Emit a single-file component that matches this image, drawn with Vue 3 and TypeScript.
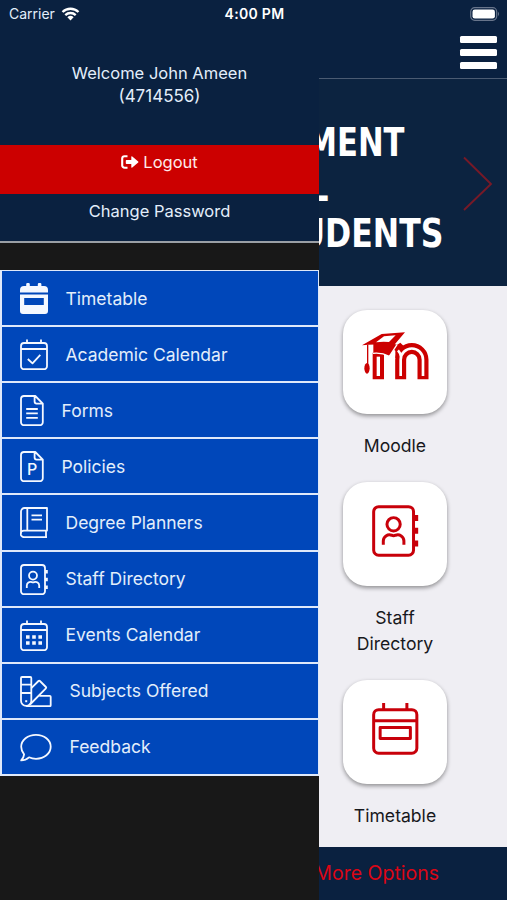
<script setup lang="ts">
import { defineComponent, h } from 'vue'

type IconName =
  | 'timetable'
  | 'academic'
  | 'forms'
  | 'policies'
  | 'planner'
  | 'staff'
  | 'events'
  | 'subjects'
  | 'feedback'
  | 'schedule'

interface Entry {
  label: string
  icon: IconName
}

const frame = 'M4 4h20a3 3 0 0 1 3 3v20.2a3 3 0 0 1-3 3H4a3 3 0 0 1-3-3V7a3 3 0 0 1 3-3z'
const page = 'M3.5 1h11.8L22.8 8.6v18.6a3 3 0 0 1-3 3H4a3 3 0 0 1-3-3V4a3 3 0 0 1 3-3zM14.6 1v5.6a2 2 0 0 0 2 2h6.2'

interface Shape {
  width: number
  lines: string[]
  solid?: string
  letter?: string
}

const shapes: Record<IconName, Shape> = {
  timetable: {
    width: 28,
    lines: [],
    solid:
      'M6.2 3V1.2a1.2 1.2 0 0 1 1.2-1.2h1.2a1.2 1.2 0 0 1 1.2 1.2V3h8V1.2A1.2 1.2 0 0 1 19 0h1.2a1.2 1.2 0 0 1 1.2 1.2V3H24a4 4 0 0 1 4 4v2.6H0V7a4 4 0 0 1 4-4zM0 11.6h28V28a3 3 0 0 1-3 3H3a3 3 0 0 1-3-3zM4.2 15v7h19.6v-7z',
  },
  academic: { width: 28, lines: [frame, 'M1 10h26M7 .4V4M21 .4V4', 'M7.800 20l4.700 4.400 7.800-8.600'] },
  forms: { width: 24, lines: [page, 'M6.2 14h11.6M6.2 18.4h11.6M6.2 22.8h11.6'] },
  policies: { width: 24, lines: [page], letter: 'P' },
  planner: {
    width: 28,
    lines: [
      'M27 30.2H4a3.2 3.2 0 0 1 0-6.6h23V1H4.5A3.5 3.5 0 0 0 1 4.500v22.300',
      'M7.300 1v22.600M26 23.600v6.600',
      'M11.500 8.300h10.500M11.500 12.700h10.500',
    ],
  },
  staff: {
    width: 28,
    lines: [
      'M4 1h18a3 3 0 0 1 3 3v23.200a3 3 0 0 1-3 3H4a3 3 0 0 1-3-3V4a3 3 0 0 1 3-3z',
      'M13 7.600a4 4 0 1 1 0 8 4 4 0 0 1 0-8z',
      'M6.800 24v-2.400a3.700 3.700 0 0 1 5-3.400q1.200.5 2.400 0a3.700 3.700 0 0 1 5 3.400V24',
    ],
    solid: 'M25 6h2.800v3.600H25zM25 13.700h2.800v3.600H25zM25 21.400h2.800v3.600H25z',
  },
  events: {
    width: 28,
    lines: [frame, 'M1 10h26M7 .4V4M21 .4V4'],
    solid:
      'M6 15.200h3.600v3.600H6zM12.200 15.200h3.600v3.600h-3.600zM18.400 15.200H22v3.600h-3.600zM6 21.200h3.600v3.600H6zM12.200 21.200h3.600v3.600h-3.600zM18.400 21.200H22v3.600h-3.600z',
  },
  subjects: {
    width: 32,
    lines: [
      'M2 1h8.300a1 1 0 0 1 1 1v22.800a5.150 5.150 0 0 1-10.300 0V2a1 1 0 0 1 1-1z',
      'M1 8.600h10.300M1 17h10.300',
      'M11.300 12.200l7.200-7.200a1 1 0 0 1 1.400 0l6 6a1 1 0 0 1 0 1.400L10 28.500',
      'M19.300 19.800h10.400a1 1 0 0 1 1 1v8.400a1 1 0 0 1-1 1H6.200',
    ],
    solid: 'M5.200 24.200h2v2h-2z',
  },
  feedback: {
    width: 32,
    lines: [
      'M16 2.800c8.200 0 14.700 5.300 14.700 12S24.200 26.800 16 26.800c-2.600 0-4.900-.5-7-1.500-2.200 2-4.800 3.100-7.800 3.100 1.700-1.900 2.700-3.900 2.900-6.100C2.300 20.200 1.200 17.600 1.200 14.800c0-6.700 6.600-12 14.800-12z',
    ],
  },
  schedule: { width: 28, lines: [frame, 'M1 10.700h26M7 0v4M21 0v4', 'M4.900 14.700h18.200v6.600H4.900z'] },
}

const Glyph = defineComponent({
  props: { name: { type: String, required: true } },
  setup(props) {
    return () => {
      const s = shapes[props.name as IconName]
      return h('svg', { viewBox: `0 0 ${s.width} 31`, fill: 'none', 'aria-hidden': 'true' }, [
        ...s.lines.map((d) =>
          h('path', { d, stroke: 'currentColor', 'stroke-width': 1.8, 'stroke-linejoin': 'round' }),
        ),
        s.solid ? h('path', { d: s.solid, fill: 'currentColor', 'fill-rule': 'evenodd' }) : null,
        s.letter
          ? h(
              'text',
              { x: 12.2, y: 24.4, 'text-anchor': 'middle', 'font-size': 16, 'font-weight': 500, fill: 'currentColor' },
              s.letter,
            )
          : null,
      ])
    }
  },
})

const menu: Entry[] = [
  { label: 'Timetable', icon: 'timetable' },
  { label: 'Academic Calendar', icon: 'academic' },
  { label: 'Forms', icon: 'forms' },
  { label: 'Policies', icon: 'policies' },
  { label: 'Degree Planners', icon: 'planner' },
  { label: 'Staff Directory', icon: 'staff' },
  { label: 'Events Calendar', icon: 'events' },
  { label: 'Subjects Offered', icon: 'subjects' },
  { label: 'Feedback', icon: 'feedback' },
]

const tiles: { label: string; icon: IconName | null }[] = [
  { label: 'Moodle', icon: null },
  { label: 'Staff Directory', icon: 'staff' },
  { label: 'Timetable', icon: 'schedule' },
]
</script>

<template>
  <div class="screen">
    <div class="status">
      <span class="carrier">Carrier
        <svg class="wifi" viewBox="0 0 18 14" aria-hidden="true">
          <path d="M1 5a11.500 11.500 0 0 1 16 0M3.800 8.100a7.500 7.500 0 0 1 10.400 0" fill="none" stroke="#fff" stroke-width="2.300" />
          <path d="M9 13.600 5.900 10.300a4.500 4.500 0 0 1 6.200 0z" fill="#fff" />
        </svg>
      </span>
      <span class="clock">4:00 PM</span>
      <svg class="battery" viewBox="0 0 30 14" aria-hidden="true">
        <rect x=".7" y=".7" width="26" height="12.600" rx="4" fill="none" stroke="#68758b" stroke-width="1.200" />
        <rect x="2.500" y="2.500" width="22.400" height="9" rx="2.300" fill="#fff" />
        <path d="M28 4.800q2 2.200 0 4.400z" fill="#68758b" />
      </svg>
    </div>

    <aside class="drawer">
      <header class="profile">
        <p>Welcome John Ameen</p>
        <p class="number">(4714556)</p>
      </header>
      <button class="logout">
        <svg viewBox="0 0 18 14" aria-hidden="true">
          <path d="M6.500 1.200H3.600A2.400 2.400 0 0 0 1.200 3.600v6.800a2.400 2.400 0 0 0 2.400 2.400h2.900" fill="none" stroke="#fff" stroke-width="2.100" />
          <path d="M5.500 5.100h4.800V1.900q0-1.200 1-.5l5.900 5q.6.600 0 1.200l-5.900 5q-1 .7-1-.5V8.900H5.500q-.7 0-.7-.7V5.800q0-.7.7-.7z" fill="#fff" />
        </svg>
        <span>Logout</span>
      </button>
      <button class="password">Change Password</button>
      <ul class="menu">
        <li v-for="item in menu" :key="item.label">
          <Glyph :name="item.icon" class="menu-icon" />
          <span>{{ item.label }}</span>
        </li>
      </ul>
    </aside>

    <main class="page">
      <header class="topbar">
        <div class="burger"><i></i><i></i><i></i></div>
      </header>
      <section class="banner">
        <svg viewBox="0 0 188 206" aria-hidden="true">
          <g class="headline">
            <text x="85.500" y="76.500" text-anchor="end" textLength="98" lengthAdjust="spacingAndGlyphs">MENT</text>
            <text x="9.500" y="122" text-anchor="end" textLength="21" lengthAdjust="spacingAndGlyphs">L</text>
            <text x="124.500" y="168" text-anchor="end" textLength="144" lengthAdjust="spacingAndGlyphs">UDENTS</text>
          </g>
          <path d="M145 78.500 172 105 145 131" fill="none" stroke="#771927" stroke-width="1.900" />
        </svg>
      </section>
      <section class="tiles">
        <div v-for="tile in tiles" :key="tile.label" class="tile">
          <div class="card">
            <Glyph v-if="tile.icon" :name="tile.icon" class="card-icon" />
            <svg v-else class="moodle" viewBox="146 112 201 144" aria-hidden="true">
              <path d="M262 254v-59a33.500 33.500 0 0 1 67 0v59" fill="none" stroke="#c00" stroke-width="33" />
              <path d="M246 190v-22l-7-5q9-13 22-19l10 10 8 34z" fill="#c00" />
              <path d="M262 244v-49a33.500 33.500 0 0 1 67 0v49M263 186q-2-12-9-19" fill="none" stroke="#fff" stroke-width="8" />
              <path d="M178 174q18-1 34 4v76h-34z" fill="#c00" />
              <path d="M190 186h10v58h-10z" fill="#fff" />
              <path d="M180 148h62l10 2-24 35q-24-13-48-10z" fill="#c00" />
              <path d="M179 176q26-3 49 9l23-35" fill="none" stroke="#fff" stroke-width="4" />
              <path d="M146 152l59-34 70-5-35 41q-50-8-94-2z" fill="#c00" />
              <path d="M188 143l24-18 35-3-20 20q-20-2-39 1z" fill="#fff" />
              <path d="M163 150v62" stroke="#c00" stroke-width="4" />
              <ellipse cx="161" cy="221" rx="8" ry="16" fill="#c00" />
            </svg>
          </div>
          <span>{{ tile.label }}</span>
        </div>
      </section>
      <footer class="more"><span>More Options</span></footer>
    </main>
  </div>
</template>

<style>
body {
  margin: 0;
  background: #0a2140;
}
</style>

<style scoped>
.screen {
  position: relative;
  display: flex;
  width: 507px;
  height: 900px;
  overflow: hidden;
  background: #0a2140;
  font-family: Inter, "Liberation Sans", sans-serif;
  color: #e3eefb;
}
.status {
  position: absolute;
  z-index: 2;
  inset: 0 0 auto;
  display: grid;
  grid-template-columns: 1fr auto 1fr;
  align-items: center;
  height: 27px;
  padding: 0 7px 0 9px;
}
.carrier {
  display: flex;
  align-items: center;
  gap: 6px;
  font-size: 14px;
}
.wifi {
  width: 19px;
  height: 14px;
}
.clock {
  font-size: 14px;
  font-weight: 600;
  letter-spacing: 0.3px;
  color: #fff;
}
.battery {
  justify-self: end;
  width: 30px;
  height: 14px;
}
.drawer {
  flex: none;
  display: flex;
  flex-direction: column;
  width: 319px;
  overflow: hidden;
  background: #181818;
}
.profile {
  box-sizing: border-box;
  height: 145px;
  padding-top: 62px;
  background: #0a2140;
  text-align: center;
  font-size: 16.500px;
  line-height: 23px;
}
.profile p {
  margin: 0;
}
.profile .number {
  font-size: 17px;
}
.logout,
.password {
  display: flex;
  justify-content: center;
  align-items: flex-start;
  border: 0;
  margin: 0;
  font: inherit;
  font-size: 16.500px;
  line-height: 20px;
  color: inherit;
}
.logout {
  gap: 4px;
  height: 49px;
  padding: 7px 0 0;
  background: #c00;
  color: #ffeaea;
}
.logout svg {
  width: 18px;
  height: 14px;
  margin-top: 3px;
}
.password {
  box-sizing: border-box;
  height: 49px;
  padding: 7px 0 0;
  background: #0a2140;
  border-bottom: 2px solid #9a9fa5;
}
.menu {
  box-sizing: border-box;
  display: grid;
  grid-auto-rows: 1fr;
  gap: 2px;
  height: 506px;
  margin: 26.500px 0 0;
  padding: 1.500px 1px 1.500px 2px;
  background: #dfe9fa;
  list-style: none;
}
.menu li {
  display: flex;
  align-items: center;
  gap: 17.500px;
  padding-left: 18px;
  background: #0047ba;
  font-size: 17.500px;
}
.menu-icon {
  height: 31px;
  margin-top: 1px;
  color: #f4f8ff;
}
.page {
  display: flex;
  flex-direction: column;
  width: 188px;
  overflow: hidden;
  background: #efeef3;
}
.topbar {
  box-sizing: border-box;
  display: flex;
  justify-content: flex-end;
  height: 79px;
  padding: 36px 10px 0 0;
  background: #0a2140;
  border-bottom: 1px solid #4b5b72;
}
.burger {
  display: flex;
  flex-direction: column;
  gap: 6.500px;
  width: 37px;
}
.burger i {
  height: 6.500px;
  border-radius: 1.500px;
  background: #fff;
}
.banner {
  height: 206.500px;
  background: #0c2340;
}
.banner svg {
  display: block;
  width: 188px;
  height: 206px;
}
.headline {
  font-family: "DejaVu Sans Condensed", "DejaVu Sans", sans-serif;
  font-size: 39.500px;
  font-weight: 700;
  fill: #fff;
}
.tiles {
  flex: 1;
  display: flex;
  flex-direction: column;
  gap: 24px;
  padding-top: 24px;
  color: #17181c;
}
.tile {
  display: flex;
  flex-direction: column;
  align-items: center;
  gap: 19px;
  width: 104px;
  margin-left: 24px;
  text-align: center;
  font-size: 17.600px;
  line-height: 25.500px;
}
.card {
  display: flex;
  justify-content: center;
  align-items: center;
  box-sizing: border-box;
  width: 104px;
  height: 104px;
  padding-bottom: 7px;
  border-radius: 24px;
  background: #fff;
  box-shadow: 0 2px 4px rgba(0, 0, 0, 0.4);
}
.card-icon {
  height: 51.500px;
  overflow: visible;
  color: #c8000a;
}
.moodle {
  width: 67px;
  height: 48px;
  margin-bottom: 5px;
}
.more {
  display: flex;
  justify-content: flex-end;
  box-sizing: border-box;
  height: 53px;
  padding: 13px 68px 0 0;
  background: #0a2140;
  color: #dc0615;
  font-size: 19.500px;
  line-height: 26px;
  white-space: nowrap;
}
</style>
